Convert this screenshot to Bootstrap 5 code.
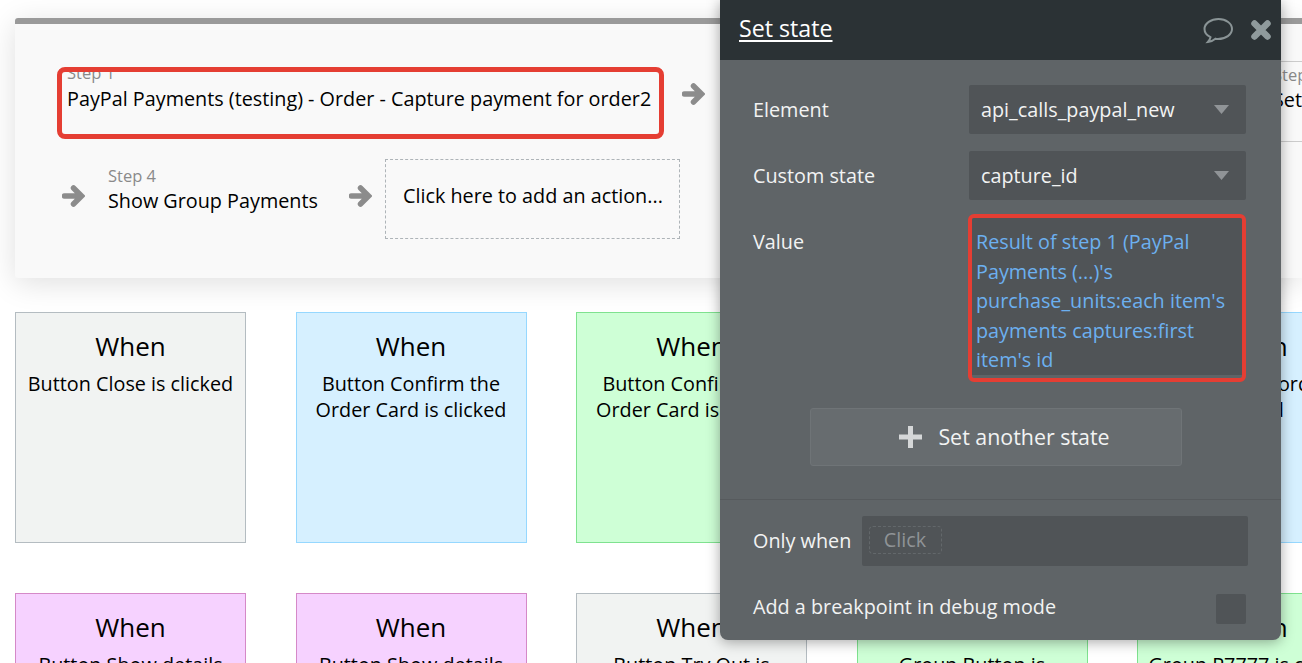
<!DOCTYPE html>
<html lang="en">
<head>
    <meta charset="UTF-8">
    <meta name="viewport" content="width=device-width, initial-scale=1.0">
    <title>Set state</title>
    <link href="https://cdn.jsdelivr.net/npm/bootstrap@5.3.2/dist/css/bootstrap.min.css" rel="stylesheet">
    <style>
        html, body { height: 663px; overflow: hidden; }
        body { font-family: "Open Sans", "Noto Sans", sans-serif; font-size: 19.8px; color: #000; background: #fff; position: relative; }

        /* workflow strip */
        .wf-strip { margin: 18px 0 0 15px; height: 260px; border-top: 6px solid #9a9a9a; border-radius: 3px 0 0 3px; background: #f9f9f9; box-shadow: 0 5px 30px rgba(0,0,0,.13); padding: 37px 0 0 42px; overflow: hidden; }
        .wf-arrow { width: 23px; height: 24px; flex: none; }
        .wf-arrow-first { margin: 21px 0 0 18px; }
        .wf-arrow-low { margin-top: 25px; }
        .wf-second { margin-top: 17px; padding-left: 5px; }
        .step-one { position: relative; width: 607px; height: 80px; flex: none; padding: 2px 0 0 10px; }
        .step-one .step-title { margin-top: 2px; }
        .step-one-mark { position: absolute; left: 0; right: 0; top: 6px; height: 72px; border: 5px solid #e53e33; border-radius: 8px; }
        .step-label { font-size: 16.5px; line-height: 20px; color: #8a8a8a; }
        .step-title { line-height: 27px; white-space: nowrap; }
        .step-hidden { width: 557px; height: 80px; flex: none; }
        .step-edge { width: 200px; height: 81px; flex: none; padding: 3px 0 0 11px; border-top: 1px solid #ccc; border-bottom: 1px solid #ccc; }
        .step-edge .step-title { margin-top: 1px; }
        .step-four { width: 264px; flex: none; padding: 7px 0 0 23px; }
        .step-four .step-title { line-height: 30px; }
        .step-add { width: 295px; height: 80px; flex: none; margin-left: 13px; padding-top: 22px; padding-left: 17px; border: 1px dashed #aeb4b8; line-height: 27px; white-space: nowrap; }

        /* event cards */
        .ev-grid { display: grid; grid-template-columns: repeat(5, 231px); column-gap: 49.5px; row-gap: 50px; margin: 34px 0 0 15px; width: 1400px; }
        .ev-card { height: 231px; border: 1px solid; padding: 15px 8px 0; text-align: center; line-height: 26px; }
        .ev-when { font-size: 26px; line-height: 36px; margin-bottom: 7px; }
        .ev-grey { background: #f1f3f2; border-color: #b4bcc1; }
        .ev-blue { background: #d6f0ff; border-color: #96d8ff; }
        .ev-green { background: #ceffd6; border-color: #7fe28f; }
        .ev-pink { background: #f6d2ff; border-color: #d589c8; }

        /* property editor */
        .state-editor { position: absolute; left: 720px; top: 0; width: 561px; height: 640px; background: #5f6467; border-radius: 0 0 8px 8px; box-shadow: 0 2px 14px rgba(0,0,0,.35); color: #f2f3f3; overflow: hidden; }
        .editor-head { height: 60px; background: #2b3235; padding: 0 9px 0 19px; }
        .editor-title { font-size: 23.2px; color: #fff; text-decoration: underline; text-underline-offset: 3px; text-decoration-thickness: 1.5px; margin-bottom: 4px; }
        .editor-body { padding: 25px 35px 0 33px; }
        .field-row { height: 49px; margin-bottom: 17px; }
        .field-name { width: 216px; flex: none; }
        .field-pick { width: 277px; height: 49px; background: #505457; border-radius: 2px; padding: 0 17px 0 12px; }
        .value-row { margin-top: -3px; }
        .field-name-top { padding-top: 14px; line-height: 27px; }
        .value-box { width: 279px; height: 168px; margin-left: -1px; border: 4px solid #e53e33; border-radius: 6px; overflow: hidden; }
        .value-text { height: 157px; background: #505457; padding: 9px 4px 0 4px; line-height: 29.6px; color: #6cb0f0; }
        .add-state { width: 372px; height: 58px; margin: 26px 0 0 57px; padding-left: 23px; background: #676c6f; border: 1px solid #6f7477; border-radius: 3px; color: #f2f3f3; font-size: 21.4px; }
        .editor-rule { height: 1px; background: #565a5d; margin-top: 33px; }
        .when-row { padding: 16px 33px 0 33px; }
        .when-name { width: 109px; flex: none; white-space: nowrap; }
        .when-input { width: 386px; height: 50px; flex: none; background: #505457; border-radius: 2px; padding: 10px 0 0 7px; }
        .when-chip { width: 73px; height: 28px; border: 1px dashed #63686b; border-radius: 4px; color: #8f9396; line-height: 26px; text-align: center; padding-right: 1px; }
        .debug-row { padding: 28px 35px 0 33px; }
        .debug-name { line-height: 26px; }
        .debug-check { width: 30px; height: 30px; background: #505457; border-radius: 2px; }
    </style>
</head>
<body>
    <div class="wf-strip">
        <div class="d-flex align-items-start">
            <div class="step-one">
                <div class="step-label">Step 1</div>
                <div class="step-title">PayPal Payments (testing) - Order - Capture payment for order2</div>
                <div class="step-one-mark"></div>
            </div>
            <svg class="wf-arrow wf-arrow-first" viewBox="0 0 23 24"><path d="M2.5 12h15M11.5 4l8 8-8 8" fill="none" stroke="#8c8c8c" stroke-width="5.5" stroke-linecap="round"/></svg>
            <div class="step-hidden"></div>
            <div class="step-edge">
                <div class="step-label">Step 3</div>
                <div class="step-title">Set state</div>
            </div>
        </div>
        <div class="d-flex align-items-start wf-second">
            <svg class="wf-arrow wf-arrow-low" viewBox="0 0 23 24"><path d="M2.5 12h15M11.5 4l8 8-8 8" fill="none" stroke="#8c8c8c" stroke-width="5.5" stroke-linecap="round"/></svg>
            <div class="step-four">
                <div class="step-label">Step 4</div>
                <div class="step-title">Show Group Payments</div>
            </div>
            <svg class="wf-arrow wf-arrow-low" viewBox="0 0 23 24"><path d="M2.5 12h15M11.5 4l8 8-8 8" fill="none" stroke="#8c8c8c" stroke-width="5.5" stroke-linecap="round"/></svg>
            <div class="step-add">Click here to add an action...</div>
        </div>
    </div>

    <div class="ev-grid">
        <div class="ev-card ev-grey"><div class="ev-when">When</div>Button Close is clicked</div>
        <div class="ev-card ev-blue"><div class="ev-when">When</div>Button Confirm the<br>Order Card is clicked</div>
        <div class="ev-card ev-green"><div class="ev-when">When</div>Button Confirm the<br>Order Card is clicked</div>
        <div class="ev-card ev-grey"></div>
        <div class="ev-card ev-blue"><div class="ev-when">When</div>Button Place order is<br>clicked</div>
        <div class="ev-card ev-pink"><div class="ev-when">When</div>Button Show details</div>
        <div class="ev-card ev-pink"><div class="ev-when">When</div>Button Show details</div>
        <div class="ev-card ev-grey"><div class="ev-when">When</div>Button Try Out is</div>
        <div class="ev-card ev-green"><div class="ev-when">When</div>Group Button is</div>
        <div class="ev-card ev-green"><div class="ev-when">When</div>Group P7777 is clicked</div>
    </div>

    <div class="state-editor">
        <div class="editor-head d-flex align-items-center justify-content-between">
            <span class="editor-title">Set state</span>
            <div class="d-flex align-items-center gap-3">
                <svg width="31" height="27" viewBox="0 0 31 27"><path d="M15.5 2C8 2 1.5 6.5 1.5 12c0 3.5 2.5 6.5 6 8.2-.4 1.8-1.3 3.4-2.6 4.8 2.8-.3 5.4-1.5 7.5-3.3 1 .2 1.8.3 2.6.3 7.7 0 14-4.5 14-10S23.2 2 15.5 2z" fill="none" stroke="#8a9496" stroke-width="2"/></svg>
                <svg width="22" height="22" viewBox="0 0 22 22"><path d="M4.5 4.5l13 13M17.5 4.5l-13 13" fill="none" stroke="#8f9a9c" stroke-width="6.5" stroke-linecap="round"/></svg>
            </div>
        </div>
        <div class="editor-body">
            <div class="field-row d-flex align-items-center">
                <div class="field-name">Element</div>
                <div class="field-pick d-flex align-items-center justify-content-between">
                    <span>api_calls_paypal_new</span>
                    <svg width="15" height="9" viewBox="0 0 15 9"><path d="M0 0h15L7.5 9z" fill="#909497"/></svg>
                </div>
            </div>
            <div class="field-row d-flex align-items-center">
                <div class="field-name">Custom state</div>
                <div class="field-pick d-flex align-items-center justify-content-between">
                    <span>capture_id</span>
                    <svg width="15" height="9" viewBox="0 0 15 9"><path d="M0 0h15L7.5 9z" fill="#909497"/></svg>
                </div>
            </div>
            <div class="value-row d-flex align-items-start">
                <div class="field-name field-name-top">Value</div>
                <div class="value-box"><div class="value-text">Result of step 1 (PayPal Payments (...)'s purchase_units:each item's payments captures:first item's id</div></div>
            </div>
            <button type="button" class="add-state d-flex align-items-center justify-content-center gap-3">
                <svg width="23" height="22" viewBox="0 0 23 22"><path d="M11.5 0v22M0 11h23" fill="none" stroke="#d5d7d8" stroke-width="5"/></svg>
                <span>Set another state</span>
            </button>
        </div>
        <div class="editor-rule"></div>
        <div class="when-row d-flex align-items-center">
            <div class="when-name">Only when</div>
            <div class="when-input"><div class="when-chip">Click</div></div>
        </div>
        <div class="debug-row d-flex align-items-start justify-content-between">
            <div class="debug-name">Add a breakpoint in debug mode</div>
            <div class="debug-check"></div>
        </div>
    </div>

    <script src="https://cdn.jsdelivr.net/npm/bootstrap@5.3.2/dist/js/bootstrap.bundle.min.js"></script>
</body>
</html>
